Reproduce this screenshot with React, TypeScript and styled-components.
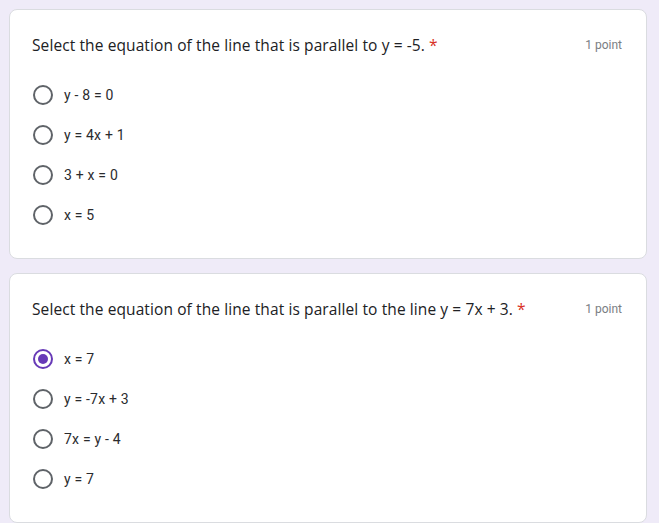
import React from "react";
import styled, { createGlobalStyle } from "styled-components";

const Global = createGlobalStyle`
  html, body {
    margin: 0;
    padding: 0;
    background: #efebf8;
  }
  body {
    font-family: Roboto, "Liberation Sans", Arial, sans-serif;
  }
`;

const Page = styled.div`
  display: flex;
  flex-direction: column;
  gap: 14px;
  padding: 9px 12px 0 9px;
  height: 523px;
  box-sizing: border-box;
  overflow: hidden;
`;

const Card = styled.div`
  background: #fff;
  border: 1px solid #dadce0;
  border-radius: 8px;
  padding: 23px 24px 23px 22px;
  flex-shrink: 0;
`;

const Header = styled.div`
  display: flex;
  align-items: flex-start;
  justify-content: space-between;
  margin-bottom: 18px;
`;

const Title = styled.div`
  font-family: "Open Sans", Roboto, sans-serif;
  font-size: 15.5px;
  line-height: 24px;
  color: #202124;
  letter-spacing: 0.1px;
`;

const Star = styled.span`
  color: #d93025;
  margin-left: 4px;
`;

const Points = styled.div`
  font-family: Roboto, sans-serif;
  font-size: 12px;
  line-height: 24px;
  color: #7a7e83;
  white-space: nowrap;
`;

const Options = styled.div`
  display: flex;
  flex-direction: column;
`;

const Option = styled.label`
  display: flex;
  align-items: center;
  height: 40px;
  gap: 11px;
  padding-left: 1px;
`;

const Radio = styled.span<{ $checked?: boolean }>`
  width: 20px;
  height: 20px;
  box-sizing: border-box;
  border-radius: 50%;
  border: 2px solid ${(p) => (p.$checked ? "#673ab7" : "#5f6368")};
  display: flex;
  align-items: center;
  justify-content: center;
  flex-shrink: 0;
  &::after {
    content: "";
    display: ${(p) => (p.$checked ? "block" : "none")};
    width: 10px;
    height: 10px;
    border-radius: 50%;
    background: #673ab7;
  }
`;

const OptionText = styled.span`
  font-size: 14px;
  letter-spacing: 0.2px;
  color: #2a2b2e;
`;

type Q = { title: string; options: string[]; selected?: number };

const questions: Q[] = [
  {
    title: "Select the equation of the line that is parallel to y = -5.",
    options: ["y - 8 = 0", "y = 4x + 1", "3 + x = 0", "x = 5"],
  },
  {
    title: "Select the equation of the line that is parallel to the line y = 7x + 3.",
    options: ["x = 7", "y = -7x + 3", "7x = y - 4", "y = 7"],
    selected: 0,
  },
];

export default function App() {
  return (
    <>
      <Global />
      <Page>
        {questions.map((q, qi) => (
          <Card key={qi}>
            <Header>
              <Title>
                {q.title}
                <Star>*</Star>
              </Title>
              <Points>1 point</Points>
            </Header>
            <Options>
              {q.options.map((o, i) => (
                <Option key={i}>
                  <Radio $checked={q.selected === i} />
                  <OptionText>{o}</OptionText>
                </Option>
              ))}
            </Options>
          </Card>
        ))}
      </Page>
    </>
  );
}
